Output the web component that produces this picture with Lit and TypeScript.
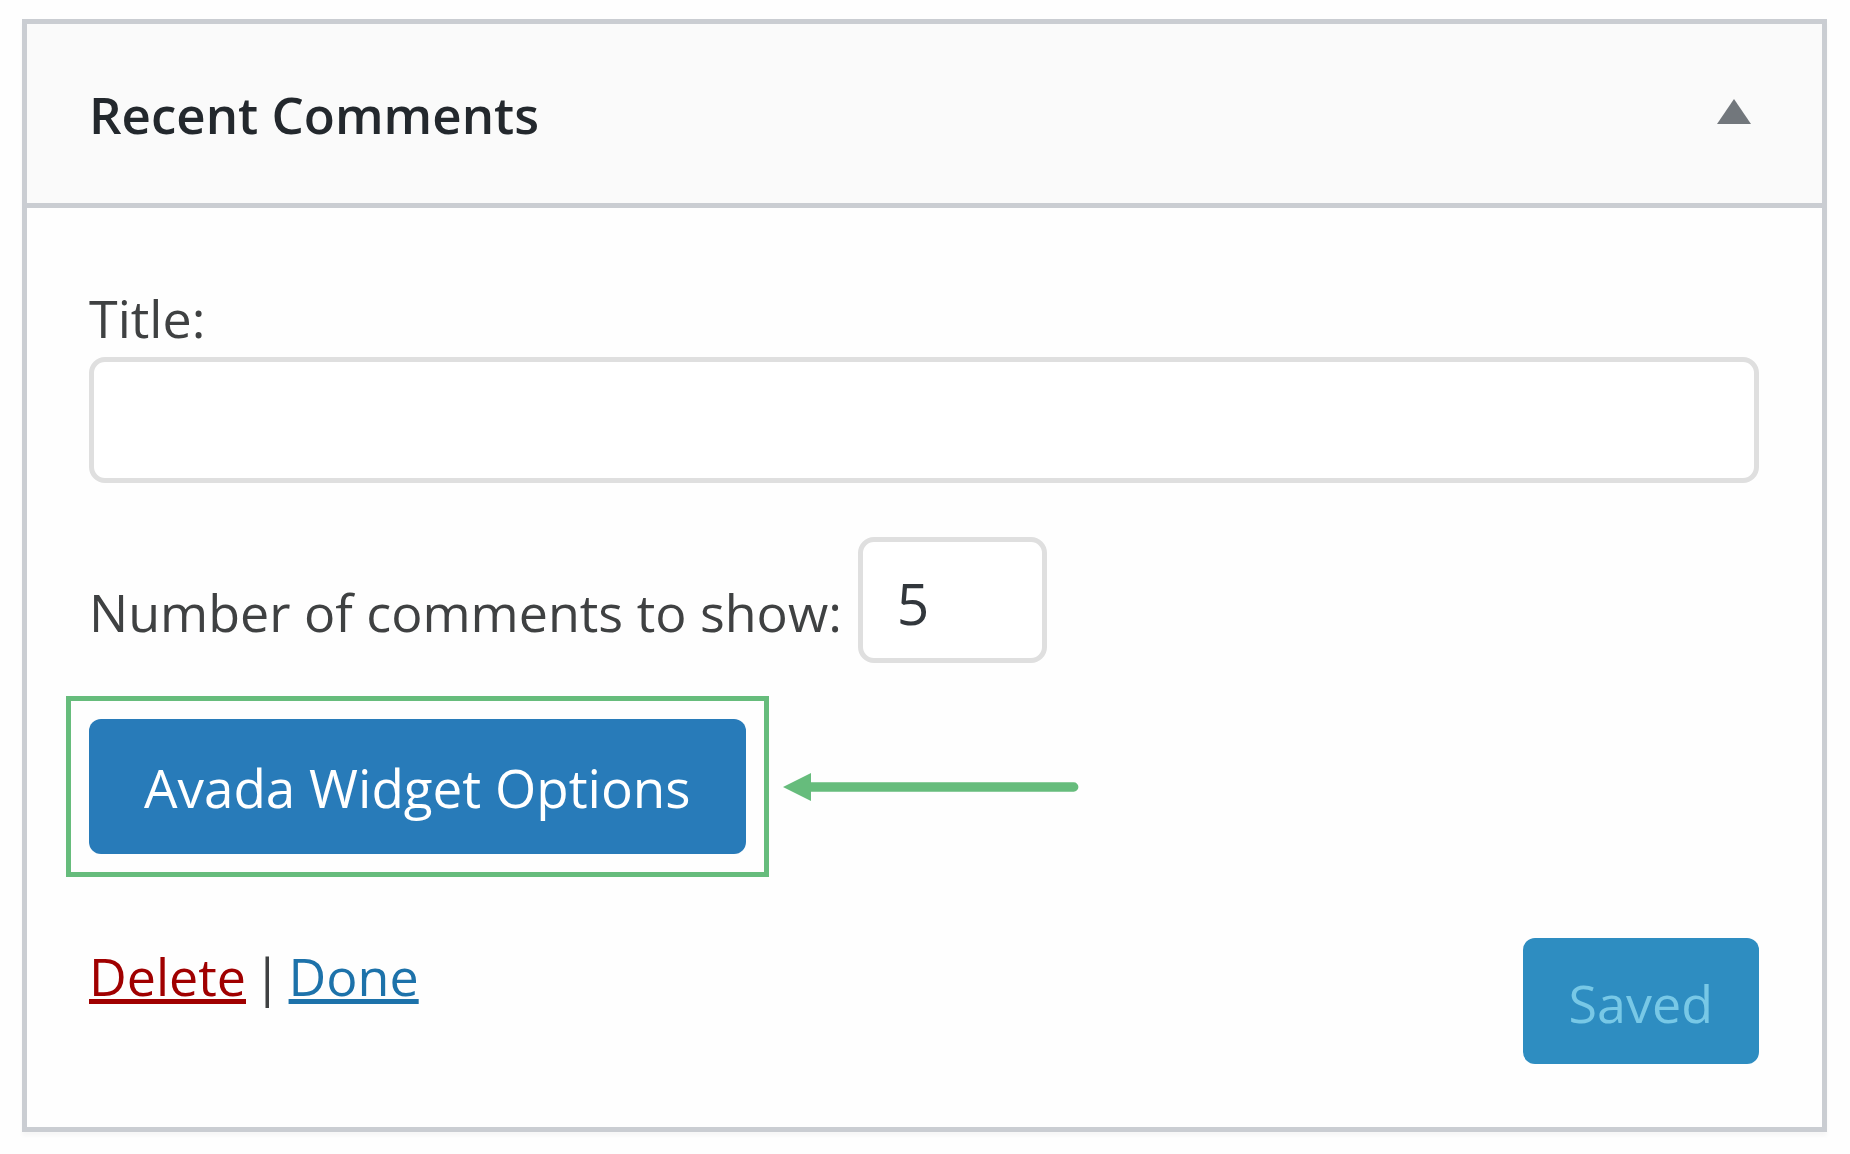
import { LitElement, html, css } from "lit";
import { customElement, property, state } from "lit/decorators.js";

@customElement("callout-arrow")
class CalloutArrow extends LitElement {
  static styles = css`
    :host {
      display: block;
      flex: none;
    }
    .arrow {
      display: block;
      width: 296px;
      height: 28px;
      fill: #66bc7c;
    }
  `;

  render() {
    return html`
      <svg class="arrow" viewBox="0 0 296 28" aria-hidden="true">
        <path d="M0 14 28 0v9.3h262.7a4.7 4.7 0 0 1 0 9.4H28V28z" />
      </svg>
    `;
  }
}

@customElement("widget-card")
class WidgetCard extends LitElement {
  @property() heading = "";
  @state() private open = true;

  static styles = css`
    :host {
      display: block;
      font-family: "Segoe UI", "Open Sans", "Noto Sans", sans-serif;
      font-size: 52px;
      line-height: 64px;
      color: #3f4142;
    }
    * {
      box-sizing: border-box;
    }
    .card {
      border: 5px solid #cacdd2;
      background: #fefefe;
      box-shadow: 0 4px 4px rgba(0, 0, 0, 0.03);
    }
    .header {
      display: flex;
      align-items: center;
      justify-content: space-between;
      padding: 58px 63px 57px 62px;
      background: #fafafa;
      border-bottom: 5px solid #cacdd2;
    }
    .heading {
      margin: 0;
      font-size: 51px;
      font-weight: 600;
      color: #23282d;
    }
    .toggle {
      display: flex;
      margin-bottom: 6px;
      padding: 8px;
      border: 0;
      background: none;
      cursor: pointer;
    }
    .toggle-icon {
      display: block;
      width: 34px;
      height: 25px;
      fill: #72777c;
    }
    .body {
      padding: 78px 63px 63px 62px;
    }
    .field {
      display: flex;
      flex-direction: column;
      gap: 7px;
    }
    .field-inline {
      display: flex;
      align-items: flex-end;
      gap: 16px;
      margin-top: 54px;
    }
    .inline-label {
      padding-bottom: 19px;
    }
    .input {
      height: 126px;
      padding: 6px 34px 0;
      border: 5px solid #dfdfdf;
      border-radius: 16px;
      background: #fff;
      font-family: inherit;
      font-size: 57px;
      color: #32373c;
      appearance: textfield;
    }
    .input::-webkit-inner-spin-button {
      appearance: none;
      margin: 0;
    }
    .input-wide {
      width: 100%;
    }
    .input-small {
      width: 189px;
    }
    .options {
      display: flex;
      align-items: center;
      gap: 14px;
      margin: 33px 0 0 -23px;
    }
    .highlight {
      padding: 18px;
      border: 5px solid #66bc7c;
    }
    .button {
      display: block;
      border: 0;
      border-radius: 12px;
      font: inherit;
      white-space: nowrap;
      cursor: pointer;
    }
    .button-options {
      padding: 37px 55px 34px;
      background: #287bb9;
      font-size: 53px;
      color: #fff;
    }
    .button-saved {
      padding: 33px 46px 29px;
      background: #2e8dc1;
      color: #78c8e6;
      cursor: default;
    }
    .footer {
      display: flex;
      align-items: flex-start;
      justify-content: space-between;
      margin-top: 61px;
    }
    .links {
      display: flex;
      gap: 7px;
      padding-top: 6px;
    }
    .link {
      text-decoration-thickness: 5px;
      text-underline-offset: 3px;
      text-decoration-skip-ink: none;
    }
    .link-delete {
      color: #a00000;
    }
    .link-done {
      color: #1d72aa;
    }
  `;

  private toggle() {
    this.open = !this.open;
  }

  private close(event: Event) {
    event.preventDefault();
    this.open = false;
  }

  render() {
    return html`
      <section class="card">
        <header class="header">
          <h3 class="heading">${this.heading}</h3>
          <button
            class="toggle"
            type="button"
            aria-label="Toggle ${this.heading}"
            aria-expanded=${this.open ? "true" : "false"}
            @click=${this.toggle}
          >
            <svg class="toggle-icon" viewBox="0 0 34 25" aria-hidden="true">
              <path d=${this.open ? "M17 0 34 25H0z" : "M0 0h34L17 25z"} />
            </svg>
          </button>
        </header>
        ${this.open ? this.renderBody() : null}
      </section>
    `;
  }

  private renderBody() {
    return html`
      <form class="body" @submit=${(e: Event) => e.preventDefault()}>
        <div class="field">
          <label for="title">Title:</label>
          <input class="input input-wide" id="title" type="text" />
        </div>
        <div class="field-inline">
          <label class="inline-label" for="count">Number of comments to show:</label>
          <input class="input input-small" id="count" type="number" min="1" value="5" />
        </div>
        <div class="options">
          <div class="highlight">
            <button class="button button-options" type="button">Avada Widget Options</button>
          </div>
          <callout-arrow></callout-arrow>
        </div>
        <div class="footer">
          <div class="links">
            <a class="link link-delete" href="#delete" @click=${this.close}>Delete</a>
            <span>|</span>
            <a class="link link-done" href="#done" @click=${this.close}>Done</a>
          </div>
          <button class="button button-saved" type="submit" disabled>Saved</button>
        </div>
      </form>
    `;
  }
}

@customElement("app-root")
class AppRoot extends LitElement {
  static styles = css`
    :host {
      display: block;
      padding: 19px 23px 22px 22px;
      background: #fefefe;
    }
  `;

  render() {
    return html`<widget-card heading="Recent Comments"></widget-card>`;
  }
}
